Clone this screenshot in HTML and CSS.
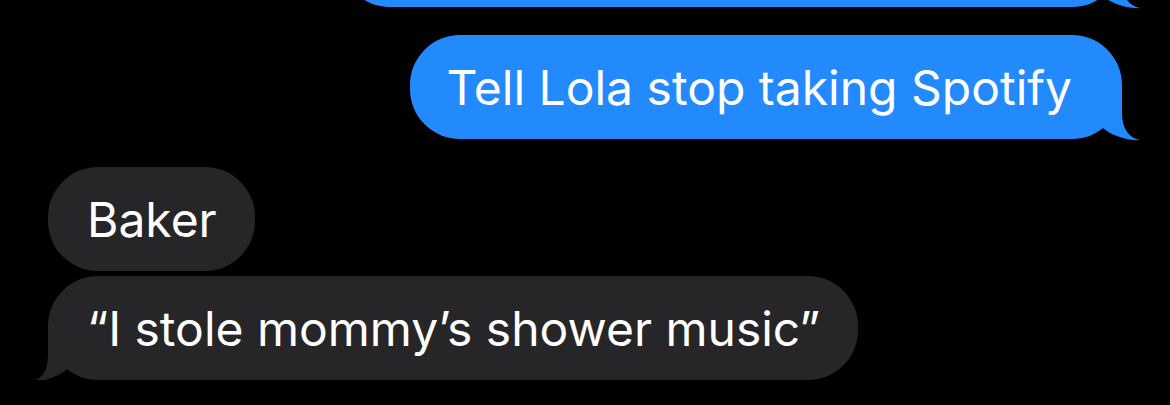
FILE: index.html
```html
<!DOCTYPE html>
<html lang="en">
<head>
<meta charset="utf-8">
<title>Messages</title>
<link rel="stylesheet" href="styles.css">
</head>
<body>
<div class="thread">
  <div class="bubble out prev">
    <svg class="tail tail-out" viewBox="0 0 45 53"><path d="M0 0 L25 0 L25 24 C25 40 32 49 43 51 C33 52 14 47 6 39 L0 39 Z"/></svg>
  </div>
  <div class="bubble out gap-l">
    <span class="text">Tell Lola stop taking Spotify</span>
    <svg class="tail tail-out" viewBox="0 0 45 53"><path d="M0 0 L25 0 L25 24 C25 40 32 49 43 51 C33 52 14 47 6 39 L0 39 Z"/></svg>
  </div>
  <div class="bubble in gap-l">
    <span class="text">Baker</span>
  </div>
  <div class="bubble in gap-s">
    <span class="text">“I stole mommy’s shower music”</span>
    <svg class="tail tail-in" viewBox="0 0 45 53"><path d="M0 0 L25 0 L25 24 C25 40 30 48 40 51 C31 52 14 47 6 39 L0 39 Z"/></svg>
  </div>
</div>
</body>
</html>
```
FILE: styles.css
```css
html, body {
  margin: 0;
  background: #000;
}

body {
  font-family: Inter, "Liberation Sans", "DejaVu Sans", sans-serif;
  -webkit-font-smoothing: antialiased;
}

.thread {
  display: flex;
  flex-direction: column;
  padding: 0 48px;
}

.bubble {
  position: relative;
  box-sizing: border-box;
  height: 104px;
  border-radius: 50px;
  display: flex;
  align-items: center;
  color: #fff;
  font-size: 48px;
  letter-spacing: 0;
  white-space: nowrap;
}

.text {
  line-height: 1;
  padding-top: 2px;
}

.out {
  align-self: flex-end;
  background: #238afe;
  padding: 0 50px 0 37px;
}

.out .tail path { fill: #238afe; }

.in {
  align-self: flex-start;
  background: #262629;
  padding: 0 38px 0 39px;
}

.in .tail path { fill: #262629; }

.prev {
  width: 782px;
  margin-top: -97px;
}

.gap-l { margin-top: 28px; }
.gap-s { margin-top: 5px; }

.tail {
  position: absolute;
  width: 45px;
  height: 53px;
  bottom: -3px;
}

.tail-out { right: -20px; }

.tail-in {
  left: -20px;
  transform: scaleX(-1);
}
```
